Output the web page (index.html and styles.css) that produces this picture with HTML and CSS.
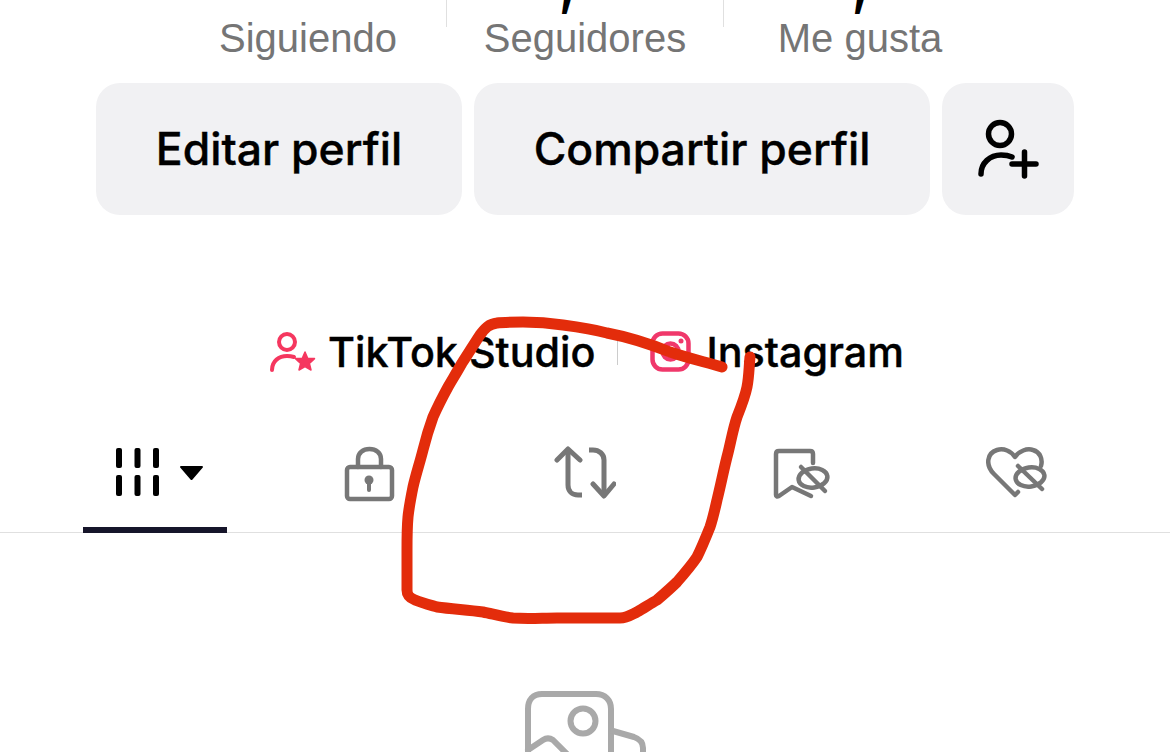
FILE: index.html
```html
<!DOCTYPE html>
<html lang="es">
<head>
    <meta charset="UTF-8">
    <meta name="viewport" content="width=device-width, initial-scale=1.0">
    <title>Perfil</title>
    <link rel="stylesheet" href="styles.css">
</head>
<body>
    <div class="stats">
        <div class="stat">
            <div class="stat-num"></div>
            <div class="stat-label">Siguiendo</div>
        </div>
        <span class="stat-sep"></span>
        <div class="stat">
            <div class="stat-num stat-num-left">,</div>
            <div class="stat-label">Seguidores</div>
        </div>
        <span class="stat-sep"></span>
        <div class="stat stat-likes">
            <div class="stat-num">,</div>
            <div class="stat-label">Me gusta</div>
        </div>
    </div>

    <div class="actions">
        <button class="btn btn-edit">Editar perfil</button>
        <button class="btn btn-share">Compartir perfil</button>
        <button class="btn btn-add" aria-label="Añadir amigos">
            <svg width="66" height="66" viewBox="0 0 66 66" fill="none" stroke="#000" stroke-width="5.500" stroke-linecap="round">
                <circle cx="25" cy="18" r="11.500"/>
                <path d="M6 58C6 47 15 39 26 39c4 0 8 .6 11 2"/>
                <path d="M37 48H61M49.500 36V60"/>
            </svg>
        </button>
    </div>

    <div class="links">
        <a class="link link-studio">
            <svg width="48" height="42" viewBox="0 0 48 42" fill="none" stroke="#f5375f" stroke-width="4" stroke-linecap="round">
                <circle cx="18" cy="11" r="8"/>
                <path d="M3 39C3 30 10 25 18 25c3 0 5 .4 7 1"/>
                <polygon points="36,21 38.700,27.300 45.500,27.600 40.400,32.400 42,39 36,35.600 30,39 31.600,32.400 26.500,27.600 33.300,27.300" fill="#f5375f" stroke-width="1.500" stroke-linejoin="round"/>
            </svg>
            <span>TikTok Studio</span>
        </a>
        <span class="link-sep"></span>
        <a class="link link-insta">
            <svg width="42" height="42" viewBox="0 0 42 42" fill="none" stroke="#f0386b" stroke-width="4.500">
                <rect x="2.500" y="2.500" width="36" height="36" rx="10"/>
                <circle cx="20.500" cy="20.500" r="8"/>
                <circle cx="31" cy="10" r="2.500" fill="#f0386b" stroke="none"/>
            </svg>
            <span>Instagram</span>
        </a>
    </div>

    <div class="tabs">
        <div class="tab tab-active">
            <svg width="98" height="52" viewBox="0 0 98 52" fill="#000">
                <rect x="10" y="2" width="6" height="20" rx="2"/>
                <rect x="28.500" y="2" width="6" height="20" rx="2"/>
                <rect x="47" y="2" width="6" height="20" rx="2"/>
                <rect x="10" y="29" width="6" height="21" rx="2"/>
                <rect x="28.500" y="29" width="6" height="21" rx="2"/>
                <rect x="47" y="29" width="6" height="21" rx="2"/>
                <path d="M75 20H96a1 1 0 0 1 .8 1.600L86.500 33.500a1.300 1.300 0 0 1-2 0L74.200 21.600A1 1 0 0 1 75 20Z"/>
            </svg>
        </div>
        <div class="tab">
            <svg class="tab-icon" width="52" height="56" viewBox="0 0 52 56" fill="none" stroke="#777" stroke-width="4.500" stroke-linecap="round" stroke-linejoin="round">
                <rect x="3" y="21" width="45" height="32" rx="3"/>
                <path d="M14 21V13C14 7 19 3 25.500 3S37 7 37 13V21"/>
                <circle cx="25" cy="34" r="4.500" fill="#777" stroke="none"/>
                <path d="M25 36V44" stroke-width="4"/>
            </svg>
        </div>
        <div class="tab">
            <svg class="tab-icon" width="62" height="54" viewBox="0 0 62 54" fill="none" stroke="#777" stroke-width="5" stroke-linecap="round" stroke-linejoin="round">
                <path d="M3 14 14 3 26 14"/>
                <path d="M14 3V39C14 45 18 49 24 49H28" stroke-linecap="butt"/>
                <path d="M35 4H39C45 4 50 8 50 14V50" stroke-linecap="butt"/>
                <path d="M39 38 50 50 60 38"/>
            </svg>
        </div>
        <div class="tab tab-bookmark">
            <svg class="tab-icon" width="62" height="54" viewBox="0 0 62 54" fill="none" stroke="#777" stroke-width="4.500" stroke-linecap="round" stroke-linejoin="round">
                <path d="M41 17V8C41 6 40 5 38 5H7C5 5 4 6 4 8V49C4 50.500 5 51 7 50L20 41 39 50"/>
                <path d="M29 21 53 45"/>
                <ellipse cx="41" cy="32" rx="14.500" ry="9.500" transform="rotate(-8 41 32)"/>
            </svg>
        </div>
        <div class="tab tab-heart">
            <svg class="tab-icon" width="62" height="54" viewBox="0 0 62 54" fill="none" stroke="#777" stroke-width="4.500" stroke-linecap="round" stroke-linejoin="round">
                <path d="M32 46 29 49 8 28C-1 19 1 7 11 4 18 2 25 5 29 11 33 5 41 2 47 4 54 6 57 13 55 20"/>
                <path d="M32 20 56 43"/>
                <ellipse cx="44" cy="31" rx="14.500" ry="9.500" transform="rotate(-8 44 31)"/>
            </svg>
        </div>
    </div>

    <div class="empty">
        <svg width="124" height="66" viewBox="0 0 124 66" fill="none" stroke="#a9a9a9" stroke-width="6" stroke-linecap="round" stroke-linejoin="round">
            <path d="M5 66V19C5 10 10 4 19 4H73C82 4 88 10 88 19V66"/>
            <circle cx="60" cy="31" r="12.500"/>
            <path d="M5 60 20 50C23 48 27 48 30 50L46 66"/>
            <path d="M90 41 111 47C117 49 120 53 120 58V66"/>
        </svg>
    </div>

    <svg class="scribble" width="1170" height="752" viewBox="0 0 1170 752" fill="none" stroke="#e32c0b" stroke-width="11" stroke-linecap="round" stroke-linejoin="round">
        <path d="M722 367C705 362 688 358 670 352C650 344 628 337 607 333C592 329 578 327 563 325C550 323 537 322 523 322C513 322 503 322 497 323C489 324 485 328 480 335C474 344 468 354 462 363C457 372 452 380 448 387C442 398 437 408 433 417C429 428 426 438 423 450C420 462 416 474 413 487C411 497 409 507 408 517C407 528 407 539 407 550C407 565 407 578 407 590C407 596 410 598 415 600C422 603 430 605 437 607C452 609 468 610 483 612C493 614 503 617 513 618C528 619 542 618 557 618C578 618 600 618 620 618C627 618 631 615 637 612C644 608 650 604 657 600C664 594 671 588 677 582C684 574 691 566 697 557C702 547 706 537 710 527C713 518 715 509 717 500C721 484 724 468 728 453C731 441 733 429 737 417C741 407 745 397 747 387C749 377 749 367 750 357"/>
    </svg>
</body>
</html>
```

FILE: styles.css
```css
:root {
    --btn-color: #f1f1f3;
    --line-color: #e0e0e0;
    --muted-color: #757575;
}

* {
    box-sizing: border-box;
    margin: 0;
    padding: 0;
}

html, body {
    height: 752px;
    overflow: hidden;
}

body {
    font-family: 'Liberation Sans', Arial, sans-serif;
    background-color: #fff;
    color: #000;
    font-variant-ligatures: none;
}

.stats {
    display: flex;
    justify-content: center;
    height: 83px;
}

.stat {
    width: 276px;
    text-align: center;
}

.stat-num {
    height: 18px;
    margin-top: -21px;
    margin-bottom: 19px;
    font-family: 'Inter', sans-serif;
    font-size: 46px;
    font-weight: 700;
    line-height: 18px;
}

.stat-num-left {
    padding-right: 36px;
}

.stat-likes {
    padding-right: 4px;
}

.stat-label {
    font-size: 40px;
    line-height: 44px;
    color: var(--muted-color);
}

.stat-sep {
    width: 1px;
    height: 27px;
    background-color: var(--line-color);
}

.actions {
    display: flex;
    justify-content: center;
    gap: 12px;
    height: 132px;
}

.btn {
    display: flex;
    align-items: center;
    justify-content: center;
    border: none;
    border-radius: 24px;
    background-color: var(--btn-color);
    color: #000;
    font-family: 'Inter', sans-serif;
    font-size: 44.500px;
    font-weight: 500;
    -webkit-text-stroke: 0.4px #000;
}

.btn-edit {
    width: 366px;
}

.btn-share {
    width: 456px;
}

.btn-add {
    width: 132px;
}

.links {
    display: flex;
    align-items: center;
    justify-content: center;
    margin-top: 115px;
    padding-left: 3px;
    height: 44px;
}

.link {
    display: flex;
    align-items: center;
    font-family: 'Inter', sans-serif;
    font-size: 41.300px;
    font-weight: 500;
    -webkit-text-stroke: 0.4px #000;
}

.link-studio {
    gap: 11px;
}

.link-insta {
    gap: 14px;
}

.link-sep {
    width: 1px;
    height: 26px;
    margin: 0 32px 0 22px;
    background-color: #ccc;
}

.tabs {
    display: flex;
    justify-content: center;
    margin-top: 57px;
    height: 102px;
    border-bottom: 1px solid var(--line-color);
}

.tab {
    position: relative;
    display: flex;
    align-items: flex-start;
    justify-content: center;
    width: 215px;
    padding-top: 15px;
}

.tab-bookmark {
    padding-left: 6px;
}

.tab-heart {
    padding-left: 4px;
}

.tab-active::after {
    content: "";
    position: absolute;
    left: 35px;
    right: 36px;
    bottom: -1px;
    height: 6px;
    background-color: #16152a;
}

.empty {
    display: flex;
    justify-content: center;
    margin-top: 157px;
}

.scribble {
    position: absolute;
    left: 0;
    top: 0;
}
```
